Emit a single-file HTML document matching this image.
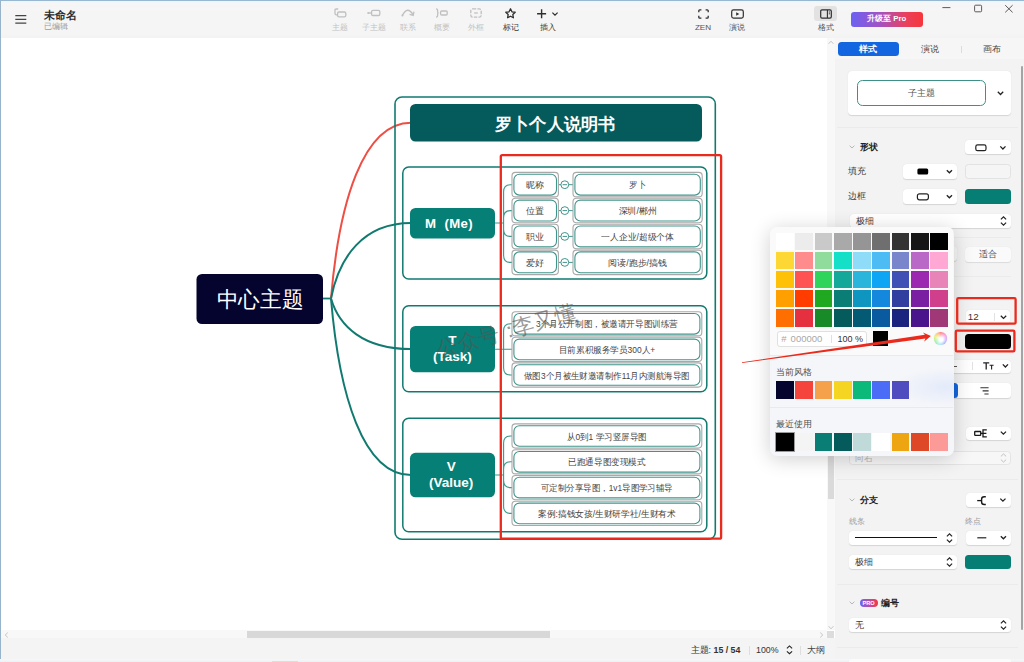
<!DOCTYPE html>
<html lang="zh">
<head>
<meta charset="utf-8">
<title>未命名</title>
<style>
*{box-sizing:border-box;margin:0;padding:0}
html,body{width:1024px;height:662px;overflow:hidden;background:#fff}
body{font-family:"Liberation Sans",sans-serif;color:#333;position:relative;font-size:10px}
.abs{position:absolute}
.t{position:absolute;white-space:nowrap;line-height:1}
.c{text-align:center}
/* window chrome */
#topline{left:0;top:0;width:1024px;height:1.3px;background:linear-gradient(#86a7c4,#a9c6dc)}
#leftline{left:0;top:0;width:1.2px;height:662px;background:#98b4ca}
#toolbar{left:1px;top:1px;width:1023px;height:36.6px;background:linear-gradient(#eef5fa 0,#f4f6f8 2px,#f7f5f3 4px,#f3f6f9 7px,#f8f5f3 9px,#f5f5f5 11px,#f5f5f5 32px,#f3f3f3 36.6px)}
#canvas{left:1px;top:38px;width:826px;height:592px;background:#fff}
#vscroll{left:827px;top:38px;width:8px;height:592px;background:#f8f8f8}
#hscroll{left:1px;top:630px;width:826px;height:8px;background:#f8f8f8}
#status{left:1px;top:638px;width:834px;height:24px;background:#f4f4f4}
#panel{left:835px;top:38px;width:189px;height:624px;background:#f3f3f3}
</style>
</head>
<body>
<div class="abs" id="toolbar"></div>
<div class="abs" id="canvas"></div>
<div class="abs" id="vscroll"></div>
<div class="abs" id="hscroll"></div>
<div class="abs" id="status"></div>
<div class="abs" id="panel"></div>
<div class="abs" id="topline"></div>
<div class="abs" id="leftline"></div>

<!-- SECTION:TOOLBAR -->
<div class="abs" id="tb">
<style>
#tb{left:0;top:0;width:1024px;height:38px}
#tb .lbl{position:absolute;top:23px;width:40px;height:9px;line-height:9px;font-size:8.1px;text-align:center;white-space:nowrap;color:#3a3a3a}
#tb .dis{color:#c2c2c2}
#tb svg{position:absolute;overflow:visible}
</style>
<!-- hamburger -->
<svg style="left:15px;top:14px" width="12" height="11" viewBox="0 0 12 11"><path d="M0.3 1.6H11.3M0.3 5.4H11.3M0.3 9.2H11.3" stroke="#444" stroke-width="1.3" fill="none"/></svg>
<div class="t" style="left:44px;top:9px;font-size:10.7px;font-weight:bold;color:#2b2b2b;line-height:12px">未命名</div>
<div class="t" style="left:44px;top:23px;font-size:7.6px;color:#9a9a9a;line-height:8px">已编辑</div>

<!-- 主题 -->
<svg style="left:334px;top:8px" width="13" height="10" viewBox="0 0 13 10"><path d="M4.2 1H2.2Q1 1 1 2.2V5.5Q1 6.8 2.3 6.8H3.4" fill="none" stroke="#c0c0c0" stroke-width="1.3"/><rect x="3.6" y="4" width="8.2" height="4.8" rx="1.4" fill="#f5f5f5" stroke="#c0c0c0" stroke-width="1.3"/></svg>
<div class="lbl dis" style="left:319.5px">主题</div>
<!-- 子主题 -->
<svg style="left:367px;top:9px" width="14" height="8" viewBox="0 0 14 8"><circle cx="1.3" cy="4" r="1.1" fill="#c0c0c0"/><path d="M2 4H4.6" stroke="#c0c0c0" stroke-width="1.3"/><rect x="4.6" y="1.3" width="8.2" height="5.2" rx="1.3" fill="none" stroke="#c0c0c0" stroke-width="1.3"/></svg>
<div class="lbl dis" style="left:353.5px">子主题</div>
<!-- 联系 -->
<svg style="left:401px;top:9px" width="14" height="8" viewBox="0 0 14 8"><path d="M1.4 6.4Q6.6 -3.4 11.9 5.6" fill="none" stroke="#c0c0c0" stroke-width="1.4"/><path d="M13 2.6L12.2 6.4L8.6 5.4" fill="none" stroke="#c0c0c0" stroke-width="1.3"/><circle cx="1.4" cy="6.5" r="1" fill="#c0c0c0"/></svg>
<div class="lbl dis" style="left:387.5px">联系</div>
<!-- 概要 -->
<svg style="left:435px;top:8px" width="14" height="10" viewBox="0 0 14 10"><path d="M1 0.8Q2.6 0.8 2.6 2.2V3.8Q2.6 5 3.6 5Q2.6 5 2.6 6.2V7.8Q2.6 9.2 1 9.2" fill="none" stroke="#c0c0c0" stroke-width="1.3"/><rect x="5.6" y="3" width="6.6" height="4" rx="1.1" fill="none" stroke="#c0c0c0" stroke-width="1.3"/></svg>
<div class="lbl dis" style="left:421.5px">概要</div>
<!-- 外框 -->
<svg style="left:470px;top:8px" width="12" height="10" viewBox="0 0 12 10"><rect x="0.8" y="0.8" width="10.4" height="8.4" rx="2" fill="none" stroke="#c0c0c0" stroke-width="1.3" stroke-dasharray="3.4 1.2"/><path d="M4.2 5H7.8" stroke="#c0c0c0" stroke-width="1.3"/></svg>
<div class="lbl dis" style="left:455.5px">外框</div>
<!-- 标记 -->
<svg style="left:505px;top:8px" width="11" height="10.5" viewBox="0 0 22 21"><path d="M11 1.6L13.9 7.6L20.4 8.5L15.7 13.1L16.8 19.6L11 16.5L5.2 19.6L6.3 13.1L1.6 8.5L8.1 7.6Z" fill="none" stroke="#2e2e2e" stroke-width="2.6" stroke-linejoin="round"/></svg>
<div class="lbl" style="left:490.5px">标记</div>
<!-- 插入 -->
<svg style="left:537px;top:8.5px" width="21" height="10" viewBox="0 0 21 10"><path d="M4.6 0.3V9.3M0.1 4.8H9.1" stroke="#2e2e2e" stroke-width="1.4" fill="none"/><path d="M15.4 3.6L18 6.1L20.6 3.6" stroke="#2e2e2e" stroke-width="1.2" fill="none"/></svg>
<div class="lbl" style="left:527.5px">插入</div>

<!-- ZEN -->
<svg style="left:697.5px;top:8.5px" width="11" height="10" viewBox="0 0 11 10"><path d="M3.4 0.8H1.8Q0.8 0.8 0.8 1.8V3.2M7.6 0.8H9.2Q10.2 0.8 10.2 1.8V3.2M0.8 6.8V8.2Q0.8 9.2 1.8 9.2H3.4M10.2 6.8V8.2Q10.2 9.2 9.2 9.2H7.6" fill="none" stroke="#2e2e2e" stroke-width="1.3"/></svg>
<div class="lbl" style="left:683px;color:#555">ZEN</div>
<!-- 演说 -->
<svg style="left:730.5px;top:8.5px" width="13" height="10" viewBox="0 0 13 10"><rect x="0.7" y="0.9" width="11.6" height="8.2" rx="1.8" fill="none" stroke="#2e2e2e" stroke-width="1.2"/><path d="M5.2 3.2L8.3 5L5.2 6.8Z" fill="#2e2e2e"/></svg>
<div class="lbl" style="left:717px;color:#555">演说</div>
<!-- 格式 -->
<div class="abs" style="left:814px;top:6px;width:23px;height:15px;border-radius:3px;background:#e2e2e2"></div>
<svg style="left:819.5px;top:8.5px" width="12" height="10" viewBox="0 0 12 10"><rect x="0.7" y="0.9" width="10.6" height="8.2" rx="1.3" fill="none" stroke="#2e2e2e" stroke-width="1.2"/><path d="M7.4 1V9" stroke="#2e2e2e" stroke-width="1.1"/><path d="M8.8 3H10M8.8 4.8H10" stroke="#2e2e2e" stroke-width="0.9"/></svg>
<div class="lbl" style="left:805.5px;color:#555">格式</div>
<!-- upgrade -->
<div class="abs c" style="left:851px;top:12px;width:71.5px;height:14.5px;border-radius:3px;background:linear-gradient(90deg,#6a62f2 0%,#a352c4 40%,#e8415f 75%,#f7363a 100%);color:#fff;font-weight:bold;font-size:7.8px;line-height:14.5px;white-space:nowrap">升级至 Pro</div>
<!-- window controls -->
<svg style="left:940px;top:3px" width="80" height="12" viewBox="0 0 80 12"><path d="M2.4 4.6H10.4" stroke="#4a4a4a" stroke-width="0.9"/><rect x="34.6" y="2.2" width="7" height="6.6" rx="1" fill="none" stroke="#4a4a4a" stroke-width="0.9"/><path d="M65.2 2.2L72.6 9.4M72.6 2.2L65.2 9.4" stroke="#4a4a4a" stroke-width="0.9"/></svg>
</div>

<!-- SECTION:MAP -->
<svg class="abs" id="map" style="left:0;top:0" width="830" height="632" viewBox="0 0 830 632" font-family="'Liberation Sans',sans-serif">
<path d="M322 298.5 H331" stroke="#117a70" stroke-width="1.8" fill="none"/>
<path d="M331 298.5 C339.0 202.7 363.0 122.7 411 122.7" fill="none" stroke="#ee4e44" stroke-width="2"/>
<path d="M331 298.5 C339.0 257.4 363.0 223 411 223" fill="none" stroke="#117a70" stroke-width="2"/>
<path d="M331 298.5 C339.0 326.0 363.0 349 411 349" fill="none" stroke="#117a70" stroke-width="2"/>
<path d="M331 298.5 C339.0 394.7 363.0 475 411 475" fill="none" stroke="#117a70" stroke-width="2"/>
<rect x="395" y="97" width="320.3" height="442.3" rx="7" fill="none" stroke="#117a70" stroke-width="1.6"/>
<rect x="402.8" y="167" width="304" height="112.0" rx="6" fill="none" stroke="#117a70" stroke-width="1.5"/>
<rect x="402.8" y="305.8" width="304" height="86.0" rx="6" fill="none" stroke="#117a70" stroke-width="1.5"/>
<rect x="402.8" y="418.3" width="304" height="113.5" rx="6" fill="none" stroke="#117a70" stroke-width="1.5"/>
<rect x="196.5" y="274" width="126.5" height="50" rx="5.5" fill="#05042e"/>
<text x="260" y="307.3" font-size="21.8" fill="#fff" text-anchor="middle" textLength="86.5" lengthAdjust="spacingAndGlyphs">中心主题</text>
<rect x="410" y="104" width="292" height="37.5" rx="5.5" fill="#055a5c"/>
<text x="555.3" y="130" font-size="17.2" font-weight="bold" fill="#fff" text-anchor="middle" textLength="120.5" lengthAdjust="spacingAndGlyphs">罗卜个人说明书</text>
<rect x="410" y="208" width="85" height="30.6" rx="5.5" fill="#067f76"/>
<text x="448.8" y="227.8" font-size="13.2" font-weight="bold" fill="#fff" text-anchor="middle" xml:space="preserve" textLength="47.6" lengthAdjust="spacing">M  (Me)</text>
<rect x="410" y="326" width="85" height="46.3" rx="5.5" fill="#067f76"/>
<text x="452.4" y="345.1" font-size="13.5" font-weight="bold" fill="#fff" text-anchor="middle">T</text>
<text x="452.4" y="361.3" font-size="13.5" font-weight="bold" fill="#fff" text-anchor="middle">(Task)</text>
<rect x="410" y="452.8" width="85" height="44.5" rx="5.5" fill="#067f76"/>
<text x="451.2" y="471.1" font-size="13.5" font-weight="bold" fill="#fff" text-anchor="middle">V</text>
<text x="451.2" y="487.2" font-size="13.5" font-weight="bold" fill="#fff" text-anchor="middle">(Value)</text>
<path d="M495 223 H503.6 M503.6 223 V191.7 Q503.6 184.7 510.6 184.7 H512.5 M503.6 223 V217.6 Q503.6 210.6 510.6 210.6 H512.5 M503.6 223 V229.4 Q503.6 236.4 510.6 236.4 H512.5 M503.6 223 V255.4 Q503.6 262.4 510.6 262.4 H512.5" fill="none" stroke="#3f958c" stroke-width="1.1"/>
<path d="M558 184.7 H573.5" stroke="#3f958c" stroke-width="1" fill="none"/>
<rect x="512" y="172.4" width="46.4" height="24.5" rx="3.5" fill="#fff" stroke="#a9a9a9" stroke-width="1.1"/><rect x="513.9" y="174.2" width="42.6" height="20.9" rx="5.5" fill="#fff" stroke="#3f958c" stroke-width="1.1"/><text x="535.2" y="188.2" font-size="8.8" fill="#444" text-anchor="middle" textLength="18" lengthAdjust="spacingAndGlyphs">昵称</text>
<rect x="573" y="172.4" width="129.2" height="24.5" rx="3.5" fill="#fff" stroke="#a9a9a9" stroke-width="1.1"/><rect x="574.9" y="174.2" width="125.4" height="20.9" rx="5.5" fill="#fff" stroke="#3f958c" stroke-width="1.1"/><text x="637.6" y="188.2" font-size="8.8" fill="#444" text-anchor="middle" textLength="17" lengthAdjust="spacingAndGlyphs">罗卜</text>
<circle cx="564.8" cy="184.7" r="3.9" fill="#fff" stroke="#3f958c" stroke-width="1"/><path d="M562.6 184.7 H567" stroke="#3f958c" stroke-width="1"/>
<path d="M558 210.6 H573.5" stroke="#3f958c" stroke-width="1" fill="none"/>
<rect x="512" y="198.3" width="46.4" height="24.5" rx="3.5" fill="#fff" stroke="#a9a9a9" stroke-width="1.1"/><rect x="513.9" y="200.1" width="42.6" height="20.9" rx="5.5" fill="#fff" stroke="#3f958c" stroke-width="1.1"/><text x="535.2" y="214.2" font-size="8.8" fill="#444" text-anchor="middle" textLength="18" lengthAdjust="spacingAndGlyphs">位置</text>
<rect x="573" y="198.3" width="129.2" height="24.5" rx="3.5" fill="#fff" stroke="#a9a9a9" stroke-width="1.1"/><rect x="574.9" y="200.1" width="125.4" height="20.9" rx="5.5" fill="#fff" stroke="#3f958c" stroke-width="1.1"/><text x="637.6" y="214.2" font-size="8.8" fill="#444" text-anchor="middle" textLength="38" lengthAdjust="spacingAndGlyphs">深圳/郴州</text>
<circle cx="564.8" cy="210.6" r="3.9" fill="#fff" stroke="#3f958c" stroke-width="1"/><path d="M562.6 210.6 H567" stroke="#3f958c" stroke-width="1"/>
<path d="M558 236.4 H573.5" stroke="#3f958c" stroke-width="1" fill="none"/>
<rect x="512" y="224.2" width="46.4" height="24.5" rx="3.5" fill="#fff" stroke="#a9a9a9" stroke-width="1.1"/><rect x="513.9" y="226.0" width="42.6" height="20.9" rx="5.5" fill="#fff" stroke="#3f958c" stroke-width="1.1"/><text x="535.2" y="240.0" font-size="8.8" fill="#444" text-anchor="middle" textLength="18" lengthAdjust="spacingAndGlyphs">职业</text>
<rect x="573" y="224.2" width="129.2" height="24.5" rx="3.5" fill="#fff" stroke="#a9a9a9" stroke-width="1.1"/><rect x="574.9" y="226.0" width="125.4" height="20.9" rx="5.5" fill="#fff" stroke="#3f958c" stroke-width="1.1"/><text x="637.6" y="240.0" font-size="8.8" fill="#444" text-anchor="middle" textLength="72.5" lengthAdjust="spacingAndGlyphs">一人企业/超级个体</text>
<circle cx="564.8" cy="236.4" r="3.9" fill="#fff" stroke="#3f958c" stroke-width="1"/><path d="M562.6 236.4 H567" stroke="#3f958c" stroke-width="1"/>
<path d="M558 262.4 H573.5" stroke="#3f958c" stroke-width="1" fill="none"/>
<rect x="512" y="250.1" width="46.4" height="24.5" rx="3.5" fill="#fff" stroke="#a9a9a9" stroke-width="1.1"/><rect x="513.9" y="251.9" width="42.6" height="20.9" rx="5.5" fill="#fff" stroke="#3f958c" stroke-width="1.1"/><text x="535.2" y="266.0" font-size="8.8" fill="#444" text-anchor="middle" textLength="18" lengthAdjust="spacingAndGlyphs">爱好</text>
<rect x="573" y="250.1" width="129.2" height="24.5" rx="3.5" fill="#fff" stroke="#a9a9a9" stroke-width="1.1"/><rect x="574.9" y="251.9" width="125.4" height="20.9" rx="5.5" fill="#fff" stroke="#3f958c" stroke-width="1.1"/><text x="637.6" y="266.0" font-size="8.8" fill="#444" text-anchor="middle" textLength="58.3" lengthAdjust="spacingAndGlyphs">阅读/跑步/搞钱</text>
<circle cx="564.8" cy="262.4" r="3.9" fill="#fff" stroke="#3f958c" stroke-width="1"/><path d="M562.6 262.4 H567" stroke="#3f958c" stroke-width="1"/>
<path d="M495 349.2 H503.6 M503.6 349.2 V330.8 Q503.6 323.8 510.6 323.8 H512.5 M503.6 349.2 H512.5 M503.6 349.2 V368.0 Q503.6 375.0 510.6 375.0 H512.5" fill="none" stroke="#3f958c" stroke-width="1.1"/>
<rect x="512" y="311.7" width="189.8" height="24.2" rx="3.5" fill="#fff" stroke="#a9a9a9" stroke-width="1.1"/><rect x="513.9" y="313.5" width="186.0" height="20.6" rx="5.5" fill="#fff" stroke="#3f958c" stroke-width="1.1"/><text x="606.9" y="327.4" font-size="8.8" fill="#444" text-anchor="middle" textLength="141.8" lengthAdjust="spacingAndGlyphs">3个月公开制图，被邀请开导图训练营</text>
<rect x="512" y="337.3" width="189.8" height="24.2" rx="3.5" fill="#fff" stroke="#a9a9a9" stroke-width="1.1"/><rect x="513.9" y="339.1" width="186.0" height="20.6" rx="5.5" fill="#fff" stroke="#3f958c" stroke-width="1.1"/><text x="606.9" y="353.0" font-size="8.8" fill="#444" text-anchor="middle" textLength="96.4" lengthAdjust="spacingAndGlyphs">目前累积服务学员300人+</text>
<rect x="512" y="362.9" width="189.8" height="24.2" rx="3.5" fill="#fff" stroke="#a9a9a9" stroke-width="1.1"/><rect x="513.9" y="364.7" width="186.0" height="20.6" rx="5.5" fill="#fff" stroke="#3f958c" stroke-width="1.1"/><text x="606.9" y="378.6" font-size="8.8" fill="#444" text-anchor="middle" textLength="165.8" lengthAdjust="spacingAndGlyphs">做图3个月被生财邀请制作11月内测航海导图</text>
<path d="M495 475 H503.6 M503.6 475 V443.0 Q503.6 436.0 510.6 436.0 H512.5 M503.6 475 V468.8 Q503.6 461.8 510.6 461.8 H512.5 M503.6 475 V480.6 Q503.6 487.6 510.6 487.6 H512.5 M503.6 475 V506.4 Q503.6 513.4 510.6 513.4 H512.5" fill="none" stroke="#3f958c" stroke-width="1.1"/>
<rect x="512" y="423.9" width="189.8" height="24.2" rx="3.5" fill="#fff" stroke="#a9a9a9" stroke-width="1.1"/><rect x="513.9" y="425.7" width="186.0" height="20.6" rx="5.5" fill="#fff" stroke="#3f958c" stroke-width="1.1"/><text x="606.9" y="439.6" font-size="8.8" fill="#444" text-anchor="middle" textLength="80.1" lengthAdjust="spacingAndGlyphs">从0到1 学习竖屏导图</text>
<rect x="512" y="449.7" width="189.8" height="24.2" rx="3.5" fill="#fff" stroke="#a9a9a9" stroke-width="1.1"/><rect x="513.9" y="451.5" width="186.0" height="20.6" rx="5.5" fill="#fff" stroke="#3f958c" stroke-width="1.1"/><text x="606.9" y="465.4" font-size="8.8" fill="#444" text-anchor="middle" textLength="77.3" lengthAdjust="spacingAndGlyphs">已跑通导图变现模式</text>
<rect x="512" y="475.5" width="189.8" height="24.2" rx="3.5" fill="#fff" stroke="#a9a9a9" stroke-width="1.1"/><rect x="513.9" y="477.3" width="186.0" height="20.6" rx="5.5" fill="#fff" stroke="#3f958c" stroke-width="1.1"/><text x="606.9" y="491.2" font-size="8.8" fill="#444" text-anchor="middle" textLength="132.1" lengthAdjust="spacingAndGlyphs">可定制分享导图，1v1导图学习辅导</text>
<rect x="512" y="501.3" width="189.8" height="24.2" rx="3.5" fill="#fff" stroke="#a9a9a9" stroke-width="1.1"/><rect x="513.9" y="503.1" width="186.0" height="20.6" rx="5.5" fill="#fff" stroke="#3f958c" stroke-width="1.1"/><text x="606.9" y="517.0" font-size="8.8" fill="#444" text-anchor="middle" textLength="137.4" lengthAdjust="spacingAndGlyphs">案例:搞钱女孩/生财研学社/生财有术</text>
<text x="438.9" y="356.9" font-size="21.4" fill="#555" fill-opacity="0.6" transform="rotate(-15.4 438.9 356.9)" textLength="143" lengthAdjust="spacing">公众号：<tspan dx="-6.5">李又懂</tspan></text>
</svg>
<!-- SECTION:PANEL -->
<div class="abs" id="pn">
<style>
#pn{left:835px;top:38px;width:189px;height:624px}
#pn .w{position:absolute;background:#fff;border-radius:3.5px;box-shadow:0 0.5px 1px rgba(0,0,0,.13)}
#pn .sep{position:absolute;left:2px;width:181px;height:1px;background:#ebebeb}
#pn .lab{position:absolute;white-space:nowrap;font-size:9.3px;line-height:10px;color:#3c3c3c}
#pn .hd{position:absolute;white-space:nowrap;font-size:9.2px;line-height:10px;color:#222;font-weight:bold}
#pn .sm{position:absolute;white-space:nowrap;font-size:7.6px;line-height:8px;color:#9c9c9c}
#pn svg{position:absolute;overflow:visible}
</style>
<!-- tab strip (coords relative to panel: x-835, y-38) -->
<div class="abs" style="left:0;top:0;width:189px;height:21px;background:#f6f6f6"></div>
<div class="abs c" style="left:2.5px;top:3.8px;width:61.2px;height:14px;border-radius:3.5px;background:#1466e0;color:#fff;font-weight:bold;font-size:9.4px;line-height:14.4px">样式</div>
<div class="abs c" style="left:75px;top:4px;width:40px;height:14px;color:#444;font-size:9.3px;line-height:14.4px">演说</div>
<div class="abs" style="left:126px;top:7.6px;width:1px;height:7px;background:#dcdcdc"></div>
<div class="abs c" style="left:136.5px;top:4px;width:40px;height:14px;color:#444;font-size:9.3px;line-height:14.4px">画布</div>

<!-- card -->
<div class="w" style="left:13.3px;top:32.8px;width:162.4px;height:44.4px;border-radius:4px"></div>
<div class="abs c" style="left:22.2px;top:42.2px;width:128.4px;height:25.4px;border:1px solid #3c9088;border-radius:5.5px;background:#fff;color:#555;font-size:8.8px;line-height:25px">子主题</div>
<svg style="left:161.5px;top:52.5px" width="7" height="5" viewBox="0 0 7 5"><path d="M0.8 0.8L3.5 3.5L6.2 0.8" fill="none" stroke="#222" stroke-width="1.3"/></svg>
<div class="sep" style="top:89.3px"></div>

<!-- 形状 -->
<svg style="left:13.5px;top:106.5px" width="6" height="4" viewBox="0 0 6 4"><path d="M0.6 0.6L3 3L5.4 0.6" fill="none" stroke="#b0b0b0" stroke-width="0.9"/></svg>
<div class="hd" style="left:24.5px;top:103.5px">形状</div>
<div class="w" style="left:130.4px;top:102.3px;width:45.3px;height:13.8px"></div>
<svg style="left:139.5px;top:105.7px" width="34" height="8" viewBox="0 0 34 8"><rect x="0.8" y="0.9" width="10.2" height="5.8" rx="1.8" fill="none" stroke="#222" stroke-width="1.2"/><path d="M25.3 2.4L27.9 5L30.5 2.4" fill="none" stroke="#222" stroke-width="1.3"/></svg>

<div class="lab" style="left:13.3px;top:128.3px">填充</div>
<div class="w" style="left:68.2px;top:126.4px;width:53.8px;height:14.2px"></div>
<svg style="left:86px;top:130.2px" width="34" height="8" viewBox="0 0 34 8"><rect x="-3.6" y="0.6" width="10.8" height="6" rx="1.5" fill="#000"/><path d="M25.8 2.2L28.4 4.8L31 2.2" fill="none" stroke="#222" stroke-width="1.3"/></svg>
<div class="abs" style="left:130.4px;top:126.4px;width:45.3px;height:14.2px;border-radius:3.5px;background:#f5f5f5;border:1px solid #e2e2e2"></div>

<div class="lab" style="left:13.3px;top:153.2px">边框</div>
<div class="w" style="left:68.2px;top:151.2px;width:53.8px;height:14.5px"></div>
<svg style="left:85px;top:155.2px" width="34" height="8" viewBox="0 0 34 8"><rect x="-2.6" y="0.8" width="11" height="6" rx="2" fill="none" stroke="#222" stroke-width="1.2"/><path d="M26.8 2.2L29.4 4.8L32 2.2" fill="none" stroke="#222" stroke-width="1.3"/></svg>
<div class="abs" style="left:130.4px;top:151.2px;width:45.3px;height:14.5px;border-radius:3.5px;background:#077e74"></div>

<div class="w" style="left:14.5px;top:175.6px;width:161.2px;height:14.6px"></div>
<div class="lab" style="left:20.5px;top:178.2px">极细</div>
<svg style="left:164.5px;top:178px" width="7" height="10" viewBox="0 0 7 10"><path d="M0.9 3.4L3.5 0.9L6.1 3.4M0.9 6.6L3.5 9.1L6.1 6.6" fill="none" stroke="#222" stroke-width="1.2"/></svg>
<div class="sep" style="top:199.2px;left:14px;width:161.5px"></div>

<!-- hidden field edge + 适合 -->
<div class="abs" style="left:100px;top:207.8px;width:22px;height:15.2px;border-radius:3.5px;background:#f9f9f9;box-shadow:0 0.5px 1px rgba(0,0,0,.13)"></div>
<div class="abs c" style="left:130.4px;top:209px;width:45.3px;height:14.6px;border-radius:3.5px;background:#fafafa;box-shadow:0 0.5px 1px rgba(0,0,0,.1);color:#555;font-size:9.2px;line-height:14.6px">适合</div>
<div class="sep" style="top:238px;left:14px;width:161.5px"></div>

<!-- font size 12 -->
<div class="w" style="left:131px;top:271.7px;width:44px;height:14px"></div>
<div class="lab" style="left:132.8px;top:273.8px;font-size:9.8px;color:#333">12</div>
<div class="abs" style="left:158.5px;top:274.5px;width:1px;height:8px;background:#e2e2e2"></div>
<svg style="left:165px;top:276.5px" width="7" height="5" viewBox="0 0 7 5"><path d="M0.8 0.8L3.5 3.4L6.2 0.8" fill="none" stroke="#222" stroke-width="1.3"/></svg>
<!-- text color swatch -->
<div class="abs" style="left:130.2px;top:296.2px;width:46px;height:15.2px;border-radius:3.5px;background:#000"></div>
<!-- Tt -->
<div class="w" style="left:100px;top:321.6px;width:75.7px;height:13.4px"></div>
<div class="abs" style="left:119px;top:327.5px;width:3px;height:1px;background:#555"></div>
<div class="abs" style="left:136.5px;top:324px;width:1px;height:8px;background:#e2e2e2"></div>
<svg style="left:147.5px;top:324.4px" width="28" height="8" viewBox="0 0 28 8"><path d="M0.2 0.9H6.2M3.2 0.9V7.6" stroke="#222" stroke-width="1.3" fill="none"/><path d="M6.6 3.2H10.6M8.6 3.2V7.6" stroke="#222" stroke-width="1.1" fill="none"/><path d="M19.8 2.4L22.4 5L25 2.4" fill="none" stroke="#222" stroke-width="1.3"/></svg>
<!-- align -->
<div class="w" style="left:100px;top:345.2px;width:75.7px;height:15px"></div>
<div class="abs" style="left:100px;top:345.2px;width:22.5px;height:15px;border-radius:3.5px;background:#1466e0"></div>
<svg style="left:144.5px;top:349.3px" width="9" height="8" viewBox="0 0 9 8"><path d="M0.4 0.8H8.6M2.6 3.9H8.6M4.4 7H8.6" stroke="#333" stroke-width="1.1" fill="none"/></svg>

<!-- structure -->
<div class="w" style="left:130.8px;top:388.9px;width:44.9px;height:12.8px"></div>
<svg style="left:138.6px;top:391.2px" width="36" height="9" viewBox="0 0 36 9"><rect x="0.7" y="2.5" width="6" height="3.8" rx="0.6" fill="none" stroke="#1a1a1a" stroke-width="1.3"/><path d="M6.7 4.4H9M12.8 0.9H9V7.9H12.8M9 4.4H12.4" fill="none" stroke="#1a1a1a" stroke-width="1.3"/><path d="M26.8 2.6L29.4 5.2L32 2.6" fill="none" stroke="#222" stroke-width="1.3"/></svg>
<div class="abs" style="left:13.6px;top:412.7px;width:162.1px;height:14.6px;border-radius:3.5px;background:#f7f7f7;border:1px solid #e4e4e4"></div>
<div class="lab" style="left:19.5px;top:415.2px;color:#b8b8b8;font-size:8.8px">向右</div>
<svg style="left:164.5px;top:415px" width="7" height="10" viewBox="0 0 7 10"><path d="M0.9 3.4L3.5 0.9L6.1 3.4M0.9 6.6L3.5 9.1L6.1 6.6" fill="none" stroke="#c0c0c0" stroke-width="1"/></svg>
<div class="sep" style="top:441.2px"></div>

<!-- 分支 -->
<svg style="left:13.5px;top:460px" width="6" height="4" viewBox="0 0 6 4"><path d="M0.6 0.6L3 3L5.4 0.6" fill="none" stroke="#b0b0b0" stroke-width="0.9"/></svg>
<div class="hd" style="left:24.5px;top:457px">分支</div>
<div class="w" style="left:130.8px;top:455.1px;width:44.9px;height:13.8px"></div>
<svg style="left:142px;top:457.6px" width="32" height="9" viewBox="0 0 32 9"><path d="M0.2 4.6H4.4" stroke="#1a1a1a" stroke-width="1.3"/><path d="M8.8 0.7H7.2Q4.6 0.7 4.6 3.2V6Q4.6 8.5 7.2 8.5H8.8" fill="none" stroke="#1a1a1a" stroke-width="1.4"/><path d="M23.3 2.6L25.9 5.2L28.5 2.6" fill="none" stroke="#222" stroke-width="1.3"/></svg>
<div class="sm" style="left:13.8px;top:480px">线条</div>
<div class="sm" style="left:130.4px;top:480px">终点</div>
<div class="w" style="left:13.6px;top:492.7px;width:108.9px;height:13.9px"></div>
<div class="abs" style="left:20px;top:499.2px;width:82px;height:1.2px;background:#111"></div>
<svg style="left:110.6px;top:494.8px" width="7" height="10" viewBox="0 0 7 10"><path d="M0.9 3.4L3.5 0.9L6.1 3.4M0.9 6.6L3.5 9.1L6.1 6.6" fill="none" stroke="#222" stroke-width="1.2"/></svg>
<div class="w" style="left:130.8px;top:492.7px;width:44.9px;height:13.9px"></div>
<svg style="left:141.5px;top:496px" width="32" height="8" viewBox="0 0 32 8"><path d="M0.3 3.8H9.3" stroke="#222" stroke-width="1.2"/><path d="M23.8 2.2L26.4 4.8L29 2.2" fill="none" stroke="#222" stroke-width="1.3"/></svg>
<div class="w" style="left:13.6px;top:516.5px;width:108.9px;height:14.6px"></div>
<div class="lab" style="left:19.5px;top:519px">极细</div>
<svg style="left:110.6px;top:518.8px" width="7" height="10" viewBox="0 0 7 10"><path d="M0.9 3.4L3.5 0.9L6.1 3.4M0.9 6.6L3.5 9.1L6.1 6.6" fill="none" stroke="#222" stroke-width="1.2"/></svg>
<div class="abs" style="left:130.4px;top:516.5px;width:45.5px;height:14.6px;border-radius:3.5px;background:#077e74"></div>
<div class="sep" style="top:546.2px"></div>

<!-- 编号 -->
<svg style="left:13.5px;top:563px" width="6" height="4" viewBox="0 0 6 4"><path d="M0.6 0.6L3 3L5.4 0.6" fill="none" stroke="#b0b0b0" stroke-width="0.9"/></svg>
<div class="abs c" style="left:24.6px;top:560.8px;width:18px;height:8px;border-radius:4px;background:linear-gradient(90deg,#6a62f2,#c24aa0 55%,#f7363a);color:#fff;font-size:5.6px;font-weight:bold;line-height:8px;letter-spacing:0.1px">PRO</div>
<div class="hd" style="left:46px;top:560px">编号</div>
<div class="w" style="left:13.6px;top:579.8px;width:162.1px;height:14.7px"></div>
<div class="lab" style="left:19.5px;top:582.3px">无</div>
<svg style="left:164.5px;top:582.2px" width="7" height="10" viewBox="0 0 7 10"><path d="M0.9 3.4L3.5 0.9L6.1 3.4M0.9 6.6L3.5 9.1L6.1 6.6" fill="none" stroke="#222" stroke-width="1.2"/></svg>

<div class="sep" style="top:608.8px"></div>
<div class="abs" style="left:13.6px;top:620.6px;width:162px;height:4px;background:#fbfbfb;border-radius:3px 3px 0 0;z-index:7"></div>
<!-- panel scrollbar -->
<div class="abs" style="left:185.8px;top:27.5px;width:2.2px;height:564.5px;background:#a4a4a4;border-radius:1px"></div>
</div>

<!-- SECTION:POPUP -->
<div class="abs" id="pop">
<style>
#pop{z-index:5;left:770.4px;top:227.4px;width:183.4px;height:228.6px;border-radius:7px;background:#f5f6f9;box-shadow:0 3px 20px rgba(0,0,0,.19);overflow:hidden}
#pop i{position:absolute;display:block}
#pop .lab{position:absolute;white-space:nowrap;font-size:9.4px;line-height:10px;color:#505050}
</style>
<div class="abs" style="left:0;top:0;width:183px;height:127.6px;background:#fafafa"></div>
<div class="abs" style="left:122.6px;top:139.6px;width:70px;height:40px;background:radial-gradient(ellipse at 75% 50%,rgba(205,220,250,.45),rgba(241,242,246,0) 70%)"></div>
<div class="abs" style="left:0;top:127.6px;width:183px;height:1px;background:#e9eaee"></div>
<div class="abs" style="left:0;top:179.2px;width:183px;height:1px;background:#e9eaee"></div>
<i style="left:5.7px;top:5.4px;width:17.7px;height:17.2px;background:#ffffff"></i>
<i style="left:25.0px;top:5.4px;width:17.7px;height:17.2px;background:#ececec"></i>
<i style="left:44.3px;top:5.4px;width:17.7px;height:17.2px;background:#c9c9c9"></i>
<i style="left:63.5px;top:5.4px;width:17.7px;height:17.2px;background:#a9a9a9"></i>
<i style="left:82.8px;top:5.4px;width:17.7px;height:17.2px;background:#959595"></i>
<i style="left:102.1px;top:5.4px;width:17.7px;height:17.2px;background:#6f6f6f"></i>
<i style="left:121.4px;top:5.4px;width:17.7px;height:17.2px;background:#333333"></i>
<i style="left:140.7px;top:5.4px;width:17.7px;height:17.2px;background:#151515"></i>
<i style="left:159.9px;top:5.4px;width:17.7px;height:17.2px;background:#000000"></i>
<i style="left:5.7px;top:24.6px;width:17.7px;height:17.2px;background:#fdd835"></i>
<i style="left:25.0px;top:24.6px;width:17.7px;height:17.2px;background:#ff8c8c"></i>
<i style="left:44.3px;top:24.6px;width:17.7px;height:17.2px;background:#8fdc9c"></i>
<i style="left:63.5px;top:24.6px;width:17.7px;height:17.2px;background:#14e0c8"></i>
<i style="left:82.8px;top:24.6px;width:17.7px;height:17.2px;background:#8fdcf8"></i>
<i style="left:102.1px;top:24.6px;width:17.7px;height:17.2px;background:#4dbcf5"></i>
<i style="left:121.4px;top:24.6px;width:17.7px;height:17.2px;background:#7986cb"></i>
<i style="left:140.7px;top:24.6px;width:17.7px;height:17.2px;background:#ba68c8"></i>
<i style="left:159.9px;top:24.6px;width:17.7px;height:17.2px;background:#ffa8d4"></i>
<i style="left:5.7px;top:43.7px;width:17.7px;height:17.2px;background:#ffc107"></i>
<i style="left:25.0px;top:43.7px;width:17.7px;height:17.2px;background:#ff5252"></i>
<i style="left:44.3px;top:43.7px;width:17.7px;height:17.2px;background:#2fd45a"></i>
<i style="left:63.5px;top:43.7px;width:17.7px;height:17.2px;background:#14a89a"></i>
<i style="left:82.8px;top:43.7px;width:17.7px;height:17.2px;background:#2ab6dc"></i>
<i style="left:102.1px;top:43.7px;width:17.7px;height:17.2px;background:#0ea5f5"></i>
<i style="left:121.4px;top:43.7px;width:17.7px;height:17.2px;background:#3f51b5"></i>
<i style="left:140.7px;top:43.7px;width:17.7px;height:17.2px;background:#9c27b0"></i>
<i style="left:159.9px;top:43.7px;width:17.7px;height:17.2px;background:#e884b8"></i>
<i style="left:5.7px;top:62.8px;width:17.7px;height:17.2px;background:#ffa000"></i>
<i style="left:25.0px;top:62.8px;width:17.7px;height:17.2px;background:#ff3d00"></i>
<i style="left:44.3px;top:62.8px;width:17.7px;height:17.2px;background:#1fa820"></i>
<i style="left:63.5px;top:62.8px;width:17.7px;height:17.2px;background:#0a7d74"></i>
<i style="left:82.8px;top:62.8px;width:17.7px;height:17.2px;background:#0e96c0"></i>
<i style="left:102.1px;top:62.8px;width:17.7px;height:17.2px;background:#1488dc"></i>
<i style="left:121.4px;top:62.8px;width:17.7px;height:17.2px;background:#303f9f"></i>
<i style="left:140.7px;top:62.8px;width:17.7px;height:17.2px;background:#7b1fa2"></i>
<i style="left:159.9px;top:62.8px;width:17.7px;height:17.2px;background:#cf3f8c"></i>
<i style="left:5.7px;top:82.0px;width:17.7px;height:17.2px;background:#ff6f00"></i>
<i style="left:25.0px;top:82.0px;width:17.7px;height:17.2px;background:#e5303f"></i>
<i style="left:44.3px;top:82.0px;width:17.7px;height:17.2px;background:#188a28"></i>
<i style="left:63.5px;top:82.0px;width:17.7px;height:17.2px;background:#055a5c"></i>
<i style="left:82.8px;top:82.0px;width:17.7px;height:17.2px;background:#045a72"></i>
<i style="left:102.1px;top:82.0px;width:17.7px;height:17.2px;background:#0a5aa0"></i>
<i style="left:121.4px;top:82.0px;width:17.7px;height:17.2px;background:#1a237e"></i>
<i style="left:140.7px;top:82.0px;width:17.7px;height:17.2px;background:#4a148c"></i>
<i style="left:159.9px;top:82.0px;width:17.7px;height:17.2px;background:#a03878"></i>
<div class="abs" style="left:6.4px;top:104px;width:90.4px;height:15.4px;border-radius:3px;background:#fff;border:1px solid #e0e0e0"></div>
<div class="lab" style="left:10.8px;top:106.8px;color:#a8a8a8;font-size:9.5px;word-spacing:1.5px">#&nbsp;000000</div>
<div class="abs" style="left:60.8px;top:107.6px;width:1px;height:8px;background:#e0e0e0"></div>
<div class="lab" style="left:67.2px;top:106.8px;color:#333;font-size:9px">100&nbsp;%</div>
<i style="left:102.2px;top:103.2px;width:15.6px;height:15.2px;background:#000"></i>
<div class="abs" style="left:164.1px;top:105.1px;width:12.4px;height:12.4px;border-radius:50%;background:radial-gradient(circle at 55% 58%,#fff 0%,#fff 18%,rgba(255,255,255,0) 66%),conic-gradient(#ff8a8a 0deg,#ff90d8 55deg,#b48cff 100deg,#8090ff 140deg,#86e6f0 185deg,#8cf0a0 235deg,#f0f07c 290deg,#ffc08a 335deg,#ff8a8a 360deg);box-shadow:0 0 1px rgba(0,0,0,.15)"></div>
<div class="lab" style="left:5.8px;top:139.2px">当前风格</div>
<i style="left:5.7px;top:153.5px;width:17.7px;height:18px;background:#04042e"></i>
<i style="left:25.0px;top:153.5px;width:17.7px;height:18px;background:#f5443c"></i>
<i style="left:44.3px;top:153.5px;width:17.7px;height:18px;background:#f5a04a"></i>
<i style="left:63.5px;top:153.5px;width:17.7px;height:18px;background:#f5d522"></i>
<i style="left:82.8px;top:153.5px;width:17.7px;height:18px;background:#0cb87a"></i>
<i style="left:102.1px;top:153.5px;width:17.7px;height:18px;background:#4a6cf7"></i>
<i style="left:121.4px;top:153.5px;width:17.7px;height:18px;background:#4f4cc0"></i>
<div class="lab" style="left:5.8px;top:191.8px">最近使用</div>
<i style="left:5.7px;top:205.9px;width:17.7px;height:18.1px;background:#000000;box-shadow:inset 0 0 0 1px #000,0 0 0 1px #9a9a9a"></i>
<i style="left:25.0px;top:205.9px;width:17.7px;height:18.1px;background:#f4f4f4"></i>
<i style="left:44.3px;top:205.9px;width:17.7px;height:18.1px;background:#0a7d74"></i>
<i style="left:63.5px;top:205.9px;width:17.7px;height:18.1px;background:#055a5c"></i>
<i style="left:82.8px;top:205.9px;width:17.7px;height:18.1px;background:#bfdad8"></i>
<i style="left:102.1px;top:205.9px;width:17.7px;height:18.1px;background:#ffffff"></i>
<i style="left:121.4px;top:205.9px;width:17.7px;height:18.1px;background:#eda512"></i>
<i style="left:140.7px;top:205.9px;width:17.7px;height:18.1px;background:#de4826"></i>
<i style="left:159.9px;top:205.9px;width:17.7px;height:18.1px;background:#fc9a98"></i>
</div>
<!-- SECTION:ANNOT -->
<svg class="abs" id="annot" style="left:0;top:0;pointer-events:none;z-index:6" width="1024" height="662" viewBox="0 0 1024 662">
<rect x="500.8" y="155.1" width="220.3" height="383.6" rx="1.5" fill="none" stroke="#ea2a1c" stroke-width="2.3"/>
<rect x="957.2" y="298.2" width="58.4" height="25.5" rx="1.2" fill="none" stroke="#ea2a1c" stroke-width="2.3"/>
<rect x="955.8" y="330.7" width="58.6" height="20.7" rx="1.2" fill="none" stroke="#ea2a1c" stroke-width="2.3"/>
<path d="M742 362.3L924.9 334.8L922.9 332.4L930.9 335.9L924 341.7L925.5 338.6L742 362.9Z" fill="#ea2a1c"/>
</svg>

<!-- SECTION:STATUS -->
<div class="abs" id="st" style="left:0;top:0;width:840px;height:662px;pointer-events:none">
<style>
#st .s{position:absolute;white-space:nowrap;font-size:8.8px;line-height:10px;color:#333;top:644.8px}
#st svg{position:absolute;overflow:visible}
</style>
<!-- vscroll -->
<svg style="left:827.8px;top:39.6px" width="6" height="5" viewBox="0 0 6 5"><path d="M0.6 3.8L3 1.2L5.4 3.8" fill="none" stroke="#b8b8b8" stroke-width="0.8"/></svg>
<div class="abs" style="left:827.6px;top:300px;width:6.2px;height:198.6px;background:#dadada"></div>
<svg style="left:827.8px;top:624.5px" width="6" height="5" viewBox="0 0 6 5"><path d="M0.6 1.2L3 3.8L5.4 1.2" fill="none" stroke="#b8b8b8" stroke-width="0.8"/></svg>
<!-- hscroll -->
<svg style="left:4px;top:631.5px" width="5" height="6" viewBox="0 0 5 6"><path d="M3.8 0.6L1.2 3L3.8 5.4" fill="none" stroke="#b8b8b8" stroke-width="0.8"/></svg>
<div class="abs" style="left:247.2px;top:631px;width:302.4px;height:6.8px;background:#d8d8d8"></div>
<svg style="left:819px;top:631.5px" width="5" height="6" viewBox="0 0 5 6"><path d="M1.2 0.6L3.8 3L1.2 5.4" fill="none" stroke="#b8b8b8" stroke-width="0.8"/></svg>
<div class="abs" style="left:827px;top:630.8px;width:6.8px;height:7.2px;background:#dcdcdc"></div>
<!-- status text -->
<div class="s" style="left:690.6px">主题: <b style="font-weight:bold;color:#333">15 / 54</b></div>
<div class="abs" style="left:749px;top:645.5px;width:1px;height:9px;background:#dedede"></div>
<div class="s" style="left:756px">100%</div>
<svg style="left:785.6px;top:644.6px" width="7" height="10" viewBox="0 0 7 10"><path d="M0.9 3.3L3.5 0.9L6.1 3.3M0.9 6.3L3.5 8.7L6.1 6.3" fill="none" stroke="#222" stroke-width="1.1"/></svg>
<div class="abs" style="left:800px;top:645.5px;width:1px;height:9px;background:#dedede"></div>
<div class="s" style="left:807px;color:#444">大纲</div>
<!-- bottom window edge -->
<div class="abs" style="left:0;top:659.4px;width:1024px;height:2.6px;background:linear-gradient(#f4f8fa,#eef1f3)"></div>
<div class="abs" style="left:271.5px;top:660.8px;width:26.5px;height:1.2px;background:#f6d6bd"></div>
</div>

</body>
</html>
